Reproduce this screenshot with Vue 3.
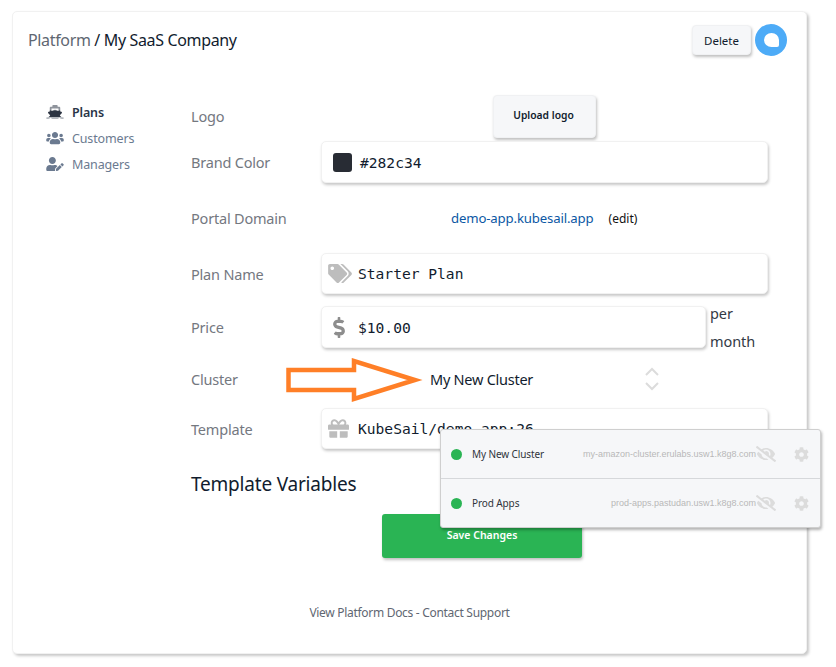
<script setup>
const icons = {
  ship: 'M496.616 372.639l70.012-70.012c16.899-16.9 9.942-45.771-12.836-53.092L512 236.102V96c0-17.673-14.327-32-32-32h-64V24c0-13.255-10.745-24-24-24H248c-13.255 0-24 10.745-24 24v40h-64c-17.673 0-32 14.327-32 32v140.102l-41.792 13.433c-22.753 7.313-29.754 36.173-12.836 53.092l70.012 70.012C125.828 416.287 85.587 448 24 448c-13.255 0-24 10.745-24 24v16c0 13.255 10.745 24 24 24 61.023 0 107.499-20.61 143.258-59.396C181.677 487.432 216.021 512 256 512h128c39.979 0 74.323-24.568 88.742-59.396C508.495 491.384 554.968 512 616 512c13.255 0 24-10.745 24-24v-16c0-13.255-10.745-24-24-24-60.817 0-101.542-31.001-119.384-75.361zM192 128h256v87.529l-118.208-37.996a32 32 0 0 0-19.584 0L192 215.529V128z',
  users: 'M96 224c35.3 0 64-28.7 64-64s-28.7-64-64-64-64 28.7-64 64 28.7 64 64 64zm448 0c35.3 0 64-28.7 64-64s-28.7-64-64-64-64 28.7-64 64 28.7 64 64 64zm32 32h-64c-17.6 0-33.5 7.1-45.1 18.6 40.3 22.1 68.9 62 75.1 109.4h66c17.7 0 32-14.3 32-32v-32c0-35.3-28.7-64-64-64zm-256 0c61.9 0 112-50.1 112-112S381.9 32 320 32 208 82.1 208 144s50.1 112 112 112zm76.8 32h-8.3c-20.8 10-43.9 16-68.5 16s-47.6-6-68.5-16h-8.3C179.6 288 128 339.6 128 403.2V432c0 26.5 21.5 48 48 48h288c26.5 0 48-21.5 48-48v-28.8c0-63.6-51.6-115.2-115.2-115.2zm-223.7-13.4C161.5 263.1 145.6 256 128 256H64c-35.3 0-64 28.7-64 64v32c0 17.7 14.3 32 32 32h65.9c6.3-47.4 34.9-87.3 75.2-109.4z',
  userEdit: 'M224 256c70.7 0 128-57.3 128-128S294.7 0 224 0 96 57.3 96 128s57.3 128 128 128zm89.6 32h-16.7c-22.2 10.2-46.9 16-72.9 16s-50.6-5.8-72.9-16h-16.7C60.2 288 0 348.2 0 422.4V464c0 26.5 21.5 48 48 48h274.9c-2.4-6.8-3.4-14-2.6-21.3l6.8-60.9 1.2-11.1 7.9-7.9 77.3-77.3c-24.5-27.7-60-45.5-99.9-45.5zm45.3 145.3l-6.8 61c-1.1 10.2 7.5 18.8 17.6 17.6l60.9-6.8 137.9-137.9-71.7-71.7-137.9 137.8zM633 268.9L595.1 231c-9.3-9.3-24.5-9.3-33.8 0l-37.8 37.8-4.1 4.1 71.8 71.7 41.8-41.8c9.3-9.4 9.3-24.5 0-33.9z',
  tags: 'M497.941 225.941L286.059 14.059A48 48 0 0 0 252.118 0H48C21.49 0 0 21.49 0 48v204.118a48 48 0 0 0 14.059 33.941l211.882 211.882c18.744 18.745 49.136 18.746 67.882 0l204.118-204.118c18.745-18.745 18.745-49.137 0-67.882zM112 160c-26.51 0-48-21.49-48-48s21.49-48 48-48 48 21.49 48 48-21.49 48-48 48zm513.941 133.823L421.823 497.941c-18.745 18.745-49.137 18.745-67.882 0l-.36-.36L527.64 323.522c16.999-16.999 26.36-39.6 26.36-63.64s-9.362-46.641-26.36-63.64L331.397 0h48.721a48 48 0 0 1 33.941 14.059l211.882 211.882c18.745 18.745 18.745 49.137 0 67.882z',
  dollar: 'M209.2 233.4l-108-31.6C88.7 198.2 80 186.5 80 173.5c0-16.3 13.2-29.5 29.5-29.5h66.3c12.2 0 24.2 3.7 34.2 10.5 6.1 4.1 14.3 3.1 19.5-2l34.8-34c7.1-6.9 6.1-18.4-1.8-24.5C238 74.8 207.4 64.1 176 64V16c0-8.8-7.2-16-16-16h-32c-8.8 0-16 7.2-16 16v48h-2.5C45.8 64-5.4 118.7.5 183.6c4.2 46.1 39.4 83.6 83.8 96.6l102.5 30c12.5 3.7 21.2 15.3 21.2 28.3 0 16.3-13.2 29.5-29.5 29.5h-66.3C100 368 88 364.3 78 357.5c-6.1-4.1-14.3-3.1-19.5 2l-34.8 34c-7.1 6.9-6.1 18.4 1.8 24.5 24.5 19.2 55.1 29.9 86.5 30v48c0 8.8 7.2 16 16 16h32c8.8 0 16-7.2 16-16v-48.2c46.6-.9 90.3-28.6 105.7-72.7 21.5-61.6-14.6-124.8-72.5-141.7z',
  gift: 'M32 448c0 17.7 14.3 32 32 32h160V320H32v128zm256 32h160c17.7 0 32-14.3 32-32V320H288v160zm192-320h-42.1c6.2-12.1 10.1-25.5 10.1-40 0-48.5-39.5-88-88-88-41.6 0-68.5 21.3-103 68.3-34.5-47-61.4-68.3-103-68.3-48.5 0-88 39.5-88 88 0 14.5 3.8 27.9 10.1 40H32c-17.7 0-32 14.3-32 32v80c0 8.8 7.2 16 16 16h480c8.8 0 16-7.2 16-16v-80c0-17.7-14.3-32-32-32zm-326.1 0c-22.1 0-40-17.9-40-40s17.9-40 40-40c19.9 0 34.6 3.3 86.1 80h-86.1zm206.1 0h-86.1c51.4-76.5 65.7-80 86.1-80 22.1 0 40 17.9 40 40s-17.9 40-40 40z',
  eyeSlash: 'M320 400c-75.85 0-137.25-58.71-142.9-133.11L72.2 185.82c-13.79 17.3-26.48 35.59-36.72 55.59a32.35 32.35 0 0 0 0 29.19C89.71 376.41 197.07 448 320 448c26.91 0 52.87-4 77.89-10.46L346 397.39a144.13 144.13 0 0 1-26 2.61zm313.82 58.1l-110.55-85.44a331.25 331.25 0 0 0 81.25-102.07 32.35 32.35 0 0 0 0-29.19C550.29 135.59 442.93 64 320 64a308.15 308.15 0 0 0-147.32 37.7L45.46 3.37A16 16 0 0 0 23 6.18L3.37 31.45A16 16 0 0 0 6.18 53.9l588.36 454.73a16 16 0 0 0 22.46-2.81l19.64-25.27a16 16 0 0 0-2.82-22.45zm-183.72-142l-39.3-30.38A94.75 94.75 0 0 0 416 256a94.76 94.76 0 0 0-121.31-92.21A47.65 47.65 0 0 1 304 192a46.64 46.64 0 0 1-1.54 10l-73.61-56.89A142.31 142.31 0 0 1 320 112a143.92 143.92 0 0 1 144 144c0 21.63-5.29 41.79-13.9 60.11z',
  cog: 'M487.4 315.7l-42.6-24.6c4.3-23.2 4.3-47 0-70.2l42.6-24.6c4.9-2.8 7.1-8.6 5.5-14-11.1-35.6-30-67.8-54.7-94.6-3.8-4.1-10-5.1-14.8-2.3L380.8 110c-17.9-15.4-38.5-27.3-60.8-35.1V25.8c0-5.6-3.9-10.5-9.4-11.7-36.7-8.2-74.3-7.8-109.2 0-5.5 1.2-9.4 6.1-9.4 11.7V75c-22.2 7.9-42.8 19.8-60.8 35.1L88.7 85.5c-4.9-2.8-11-1.9-14.8 2.3-24.7 26.7-43.6 58.9-54.7 94.6-1.7 5.4.6 11.2 5.5 14L67.3 221c-4.3 23.2-4.3 47 0 70.2l-42.6 24.6c-4.9 2.8-7.1 8.6-5.5 14 11.1 35.6 30 67.8 54.7 94.6 3.8 4.1 10 5.1 14.8 2.3l42.6-24.6c17.9 15.4 38.5 27.3 60.8 35.1v49.2c0 5.6 3.9 10.5 9.4 11.7 36.7 8.2 74.3 7.8 109.2 0 5.5-1.2 9.4-6.1 9.4-11.7v-49.2c22.2-7.9 42.8-19.8 60.8-35.1l42.6 24.6c4.9 2.8 11 1.9 14.8-2.3 24.7-26.7 43.6-58.9 54.7-94.6 1.5-5.5-.7-11.3-5.6-14.1zM256 336c-44.1 0-80-35.9-80-80s35.9-80 80-80 80 35.9 80 80-35.9 80-80 80z'
}
const nav = [
  { label: 'Plans', icon: icons.ship, active: true, fill: 'url(#shipFill)' },
  { label: 'Customers', icon: icons.users, fill: 'currentColor' },
  { label: 'Managers', icon: icons.userEdit, fill: 'currentColor' }
]
const clusters = [
  { name: 'My New Cluster', host: 'my-amazon-cluster.erulabs.usw1.k8g8.com' },
  { name: 'Prod Apps', host: 'prod-apps.pastudan.usw1.k8g8.com' }
]
</script>

<template>
  <div class="page">
    <svg class="defs" width="0" height="0">
      <defs>
        <linearGradient id="shipFill" x1="0" y1="0" x2="0" y2="1">
          <stop offset="0.36" stop-color="#8f949c" />
          <stop offset="0.42" stop-color="#2c3442" />
          <stop offset="0.82" stop-color="#2c3442" />
          <stop offset="0.88" stop-color="#b4b8be" />
        </linearGradient>
      </defs>
    </svg>
    <div class="card">
      <header class="head">
        <div class="crumb"><span class="muted">Platform</span> / My SaaS Company</div>
        <div class="head-right">
          <button class="btn-delete">Delete</button>
          <span class="avatar"><span class="bubble"></span></span>
        </div>
      </header>

      <div class="main">
        <nav class="nav">
          <a v-for="n in nav" :key="n.label" class="nav-item" :class="{ active: n.active }">
            <svg class="nav-icon" viewBox="0 0 640 512"><path :d="n.icon" :fill="n.fill" /></svg>
            <span>{{ n.label }}</span>
          </a>
        </nav>

        <div class="form">
          <div class="row r-logo">
            <label>Logo</label>
            <button class="btn-upload">Upload logo</button>
          </div>
          <div class="row r-brand">
            <label>Brand Color</label>
            <div class="field">
              <span class="swatch"></span>
              <span class="mono">#282c34</span>
            </div>
          </div>
          <div class="row r-domain">
            <label>Portal Domain</label>
            <div class="domain">
              <a class="link">demo-app.kubesail.app</a>
              <span class="edit">(edit)</span>
            </div>
          </div>
          <div class="row r-plan">
            <label>Plan Name</label>
            <div class="field">
              <svg class="ico tag" viewBox="0 0 640 512"><path :d="icons.tags" fill="currentColor" /></svg>
              <span class="mono">Starter Plan</span>
            </div>
          </div>
          <div class="row r-price">
            <label>Price</label>
            <div class="field short">
              <svg class="ico dollar" viewBox="0 0 288 512"><path :d="icons.dollar" fill="currentColor" /></svg>
              <span class="mono">$10.00</span>
            </div>
            <div class="per">per<br />month</div>
          </div>
          <div class="row r-cluster">
            <label>Cluster</label>
            <div class="select">
              <span>My New Cluster</span>
              <svg class="chev" viewBox="0 0 14 24" fill="none" stroke="#dcdcdc" stroke-width="2">
                <path d="M1 8 L7 2 L13 8" />
                <path d="M1 16 L7 22 L13 16" />
              </svg>
            </div>
          </div>
          <div class="row r-template">
            <label>Template</label>
            <div class="field">
              <svg class="ico gift" viewBox="0 0 512 512"><path :d="icons.gift" fill="currentColor" /></svg>
              <span class="mono">KubeSail/demo-app:26</span>
            </div>
          </div>
          <h2 class="vars">Template Variables</h2>
          <div class="save-wrap"><button class="btn-save">Save Changes</button></div>
        </div>
      </div>

      <footer class="foot">View Platform Docs - Contact Support</footer>
    </div>

    <svg class="arrow" width="140" height="50" viewBox="0 0 140 50">
      <polygon points="3.5,12 69,12 69,3 130,22 69,41 69,32 3.5,32" fill="#fff" stroke="#ff7f27" stroke-width="4.5" />
    </svg>

    <div class="popup">
      <div v-for="c in clusters" :key="c.name" class="pop-row">
        <span class="dot"></span>
        <span class="pop-name">{{ c.name }}</span>
        <span class="pop-host">{{ c.host }}</span>
        <svg class="pop-eye" viewBox="0 0 640 512"><path :d="icons.eyeSlash" fill="currentColor" /></svg>
        <svg class="pop-cog" viewBox="0 0 512 512"><path :d="icons.cog" fill="currentColor" /></svg>
      </div>
    </div>
  </div>
</template>

<style>
html, body { margin: 0; background: #fff; }
</style>

<style scoped>
.page {
  position: relative;
  width: 836px;
  height: 667px;
  overflow: hidden;
  padding: 11px 0 0 12px;
  box-sizing: border-box;
  font-family: "Noto Sans", sans-serif;
  color: #1a202c;
}
.defs { position: absolute; }
.card {
  width: 795px;
  height: 643px;
  box-sizing: border-box;
  background: #fff;
  border: 1px solid #f1f1f1;
  border-radius: 5px;
  box-shadow: 2px 2px 3px rgba(0, 0, 0, 0.22);
  display: flex;
  flex-direction: column;
}
.head {
  display: flex;
  justify-content: space-between;
  align-items: center;
  height: 32px;
  margin-top: 12px;
  padding: 0 19px 0 15px;
}
.crumb { font-size: 16px; letter-spacing: -0.35px; color: #111c2e; }
.muted { color: #5f6772; }
.head-right { display: flex; align-items: center; gap: 4px; }
.btn-delete {
  width: 59px;
  height: 30px;
  padding: 0;
  border: 1px solid #f0f1f3;
  border-radius: 4px;
  background: #f6f7f9;
  box-shadow: 1px 2px 3px rgba(0, 0, 0, 0.25);
  font: 11.5px "Noto Sans", sans-serif;
  color: #111c2e;
}
.avatar {
  width: 32px;
  height: 32px;
  border-radius: 50%;
  background: #4dabf7;
  display: flex;
  align-items: center;
  justify-content: center;
}
.bubble {
  width: 15px;
  height: 14px;
  background: #fff;
  border-radius: 50% 50% 2px 50%;
}
.main { display: flex; flex: 1; margin-top: 39px; }
.nav {
  width: 178px;
  box-sizing: border-box;
  padding: 7px 0 0 33px;
  display: flex;
  flex-direction: column;
  gap: 6px;
}
.nav-item {
  display: flex;
  align-items: center;
  gap: 8px;
  height: 20px;
  font-size: 12.5px;
  letter-spacing: -0.15px;
  color: #6b7a90;
}
.nav-item.active { color: #2a3648; font-weight: 600; }
.nav-icon { width: 18px; height: 14px; flex: none; }
.form { flex: 1; display: flex; flex-direction: column; padding-right: 38px; }
.row { display: flex; align-items: center; }
.row label { width: 130px; flex: none; font-size: 14.5px; letter-spacing: -0.2px; color: #74787f; }
.r-logo { height: 42px; }
.r-brand { height: 42px; margin-top: 4px; }
.r-domain { height: 40px; margin-top: 15px; }
.r-plan { height: 41px; margin-top: 15px; }
.r-price { height: 42px; margin-top: 12px; }
.r-cluster { height: 40px; margin-top: 11px; }
.r-template { height: 41px; margin-top: 9px; }
.btn-upload {
  margin-left: 172px;
  width: 103px;
  height: 43px;
  padding: 0 2px 2px 0;
  border: 1px solid #f0f1f3;
  border-radius: 4px;
  background: #f6f7f9;
  box-shadow: 1px 2px 3px rgba(0, 0, 0, 0.25);
  font: 600 10.3px "Noto Sans", sans-serif;
  color: #111c2e;
}
.field {
  flex: 1;
  height: 100%;
  box-sizing: border-box;
  display: flex;
  align-items: center;
  background: #fff;
  border: 1px solid #f1f1f1;
  border-radius: 5px;
  box-shadow: 1px 2px 3px rgba(0, 0, 0, 0.22);
  padding-left: 6px;
}
.field.short { flex: none; width: 385px; }
.swatch {
  width: 19px;
  height: 19px;
  margin-left: 5px;
  margin-right: 8px;
  border-radius: 3px;
  background: #282c34;
}
.mono {
  font-family: "DejaVu Sans Mono", monospace;
  font-size: 14.6px;
  color: #111c2e;
}
.ico { flex: none; color: #bdbdbd; }
.tag { width: 24px; height: 19px; margin-right: 6px; }
.dollar { width: 12px; height: 21px; margin-left: 5px; margin-right: 13px; color: #8d8d8d; }
.gift { width: 21px; height: 21px; margin-right: 9px; }
.domain { margin-left: 130px; display: flex; align-items: center; gap: 15px; }
.link { font-size: 13.2px; letter-spacing: -0.15px; color: #0b57a4; }
.edit { font-size: 12px; color: #111; }
.per { margin-left: 4px; font-size: 14.5px; letter-spacing: -0.1px; line-height: 28px; color: #333a45; }
.select {
  flex: 1;
  display: flex;
  align-items: center;
  justify-content: space-between;
  padding-left: 109px;
  padding-right: 109px;
  font-size: 14.5px;
  letter-spacing: -0.25px;
  color: #111c2e;
}
.chev { width: 14px; height: 24px; }
.vars {
  margin: 21px 0 0;
  height: 28px;
  line-height: 28px;
  font-size: 19px;
  letter-spacing: -0.2px;
  font-weight: 400;
  color: #111c2e;
}
.save-wrap { margin-top: 16px; margin-left: 191px; }
.btn-save {
  width: 200px;
  height: 44px;
  padding: 0 0 2px;
  display: block;
  border: 0;
  border-radius: 3px;
  background: #2ab454;
  box-shadow: 1px 2px 3px rgba(0, 0, 0, 0.25);
  font: 600 10.5px "Noto Sans", sans-serif;
  color: #fff;
}
.foot {
  height: 49px;
  text-align: center;
  font-size: 12px;
  letter-spacing: -0.3px;
  color: #5f6772;
}
.arrow { position: absolute; left: 285px; top: 358px; }
.popup {
  position: absolute;
  left: 440px;
  top: 429px;
  width: 381px;
  box-sizing: border-box;
  background: #f6f7f9;
  border: 1px solid #cfcfcf;
  border-radius: 3px;
  box-shadow: 1px 2px 3px rgba(0, 0, 0, 0.3);
}
.pop-row {
  height: 48px;
  display: flex;
  align-items: center;
  padding: 0 11px 0 10px;
}
.pop-row + .pop-row { border-top: 1px solid #d6d8db; }
.dot { width: 11px; height: 11px; border-radius: 50%; background: #2ab454; flex: none; }
.pop-name { margin-left: 10px; font-size: 10px; letter-spacing: -0.1px; color: #2f343b; }
.pop-host { margin-left: auto; font-family: "Liberation Sans", sans-serif; font-size: 9px; color: #b8b8b8; }
.pop-eye { width: 20px; height: 16px; color: #dcdcdc; flex: none; }
.pop-cog { width: 15px; height: 15px; color: #dcdcdc; margin-left: 18px; flex: none; }
</style>
